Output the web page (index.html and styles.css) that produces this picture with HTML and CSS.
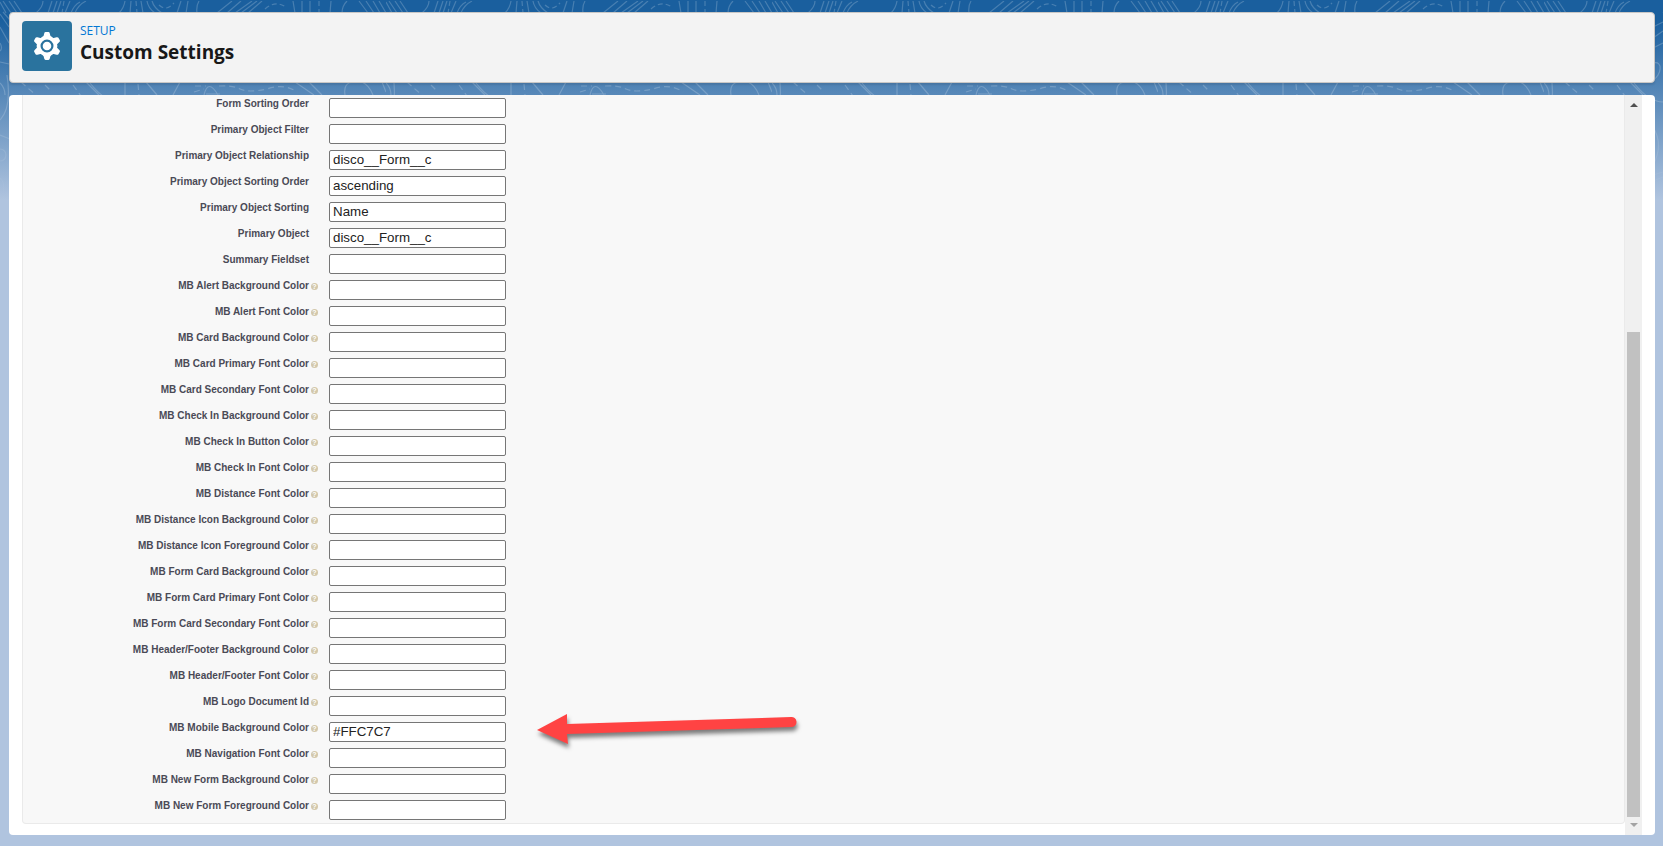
FILE: index.html
```html
<!DOCTYPE html>
<html lang="en">
<head>
    <meta charset="UTF-8">
    <meta name="viewport" content="width=device-width, initial-scale=1.0">
    <title>Custom Settings</title>
    <link rel="stylesheet" href="styles.css">
</head>
<body>

    <svg class="backdrop" width="100%" height="200" aria-hidden="true">
        <defs>
            <pattern id="contours" width="386" height="200" patternUnits="userSpaceOnUse">
                <g fill="none" stroke="#fff" stroke-opacity="0.2" stroke-width="1.2">
                    <path d="M0 2L6 13M3 1L11 13M9 1L17 13M14 1L22 13M43 1Q43 7 36 13M52 1L48 13M57 1L53 13M61 1L57 13M70 1L65 13M80 2Q74 5 71 13M86 1Q78 5 75 13"/>
                    <path d="M125 1Q124 8 119 13M131 1L130 13M141 1L143 13M147 1Q148 8 155 13M152 1Q154 8 162 13M181 1L177 13M188 1L186 13M199 1Q196 6 197 13M232 1L217 13M241 1L227 13M252 1L235 13M257 1L241 13M262 1L248 13M293 1L295 13M302 1V13M310 1V13M331 1L330 13M347 1Q342 6 342 13M359 1L368 13M366 1L374 13M373 1L380 13M379 1L386 13"/>
                    <path stroke-dasharray="5 3" d="M64 1L62 13M136 1L137 13M159 5Q166 12 174 3M265 9Q275 0 286 7M319 1V13"/>
                    <path d="M0 83Q5 88 5 95M86 82L99 95M125 82V95M146 82L157 95M180 82L173 95M204 95Q208 78 218 95M295 82L314 95M309 82L322 95M345 95Q343 83 353 82M362 82Q369 85 373 95M382 82L386 92M206 94H220"/>
                    <path stroke-dasharray="6 4" d="M21 82L37 96M45 85L50 90M73 85L81 96M138 84L139 95M195 86H206M194 92L204 89M219 86Q232 85 240 89T267 89Q284 83 297 92"/>
                    <path d="M0 14L9 27M0 27L9 43M3 12L10 20M0 62L9 64M7 75Q12 108 0 120M0 43Q3 48 0 51M0 135L10 139M0 149A6 6 0 0 1 0 161M0 178Q5 182 3 192"/>
                    <path d="M109 27L119 22M109 38L119 31M109 48L119 43M109 63C120 60 117 76 109 80M90 83Q105 102 119 102M109 127Q120 145 109 165M109 175L119 172M109 181L119 177"/>
                </g>
            </pattern>
        </defs>
        <rect width="100%" height="200" y="1" fill="url(#contours)"/>
    </svg>

    <header class="page-header">
        <svg class="header-icon" width="50" height="50" viewBox="0 0 50 50" aria-hidden="true">
            <rect width="50" height="50" rx="4" fill="#2a739e"/>
            <g transform="translate(25 25)" fill="#fff">
                <circle r="10.4"/>
                <g id="teeth">
                    <path id="tooth" d="M-4 -8L-2.8 -12.6Q-2.5 -14 -1.4 -14H1.4Q2.5 -14 2.8 -12.6L4 -8Z"/>
                    <use href="#tooth" transform="rotate(60)"/>
                    <use href="#tooth" transform="rotate(120)"/>
                    <use href="#tooth" transform="rotate(180)"/>
                    <use href="#tooth" transform="rotate(240)"/>
                    <use href="#tooth" transform="rotate(300)"/>
                </g>
                <circle r="5.4" stroke="#2a739e" stroke-width="2.2"/>
            </g>
        </svg>
        <div class="header-text">
            <p class="header-kicker">SETUP</p>
            <h1>Custom Settings</h1>
        </div>
    </header>

    <main class="panel">
        <form class="settings-form" id="settings-form"></form>
        <div class="scrollbar" aria-hidden="true">
            <svg width="8" height="4"><path d="M0 4L4 0L8 4Z" fill="#505050"/></svg>
            <div class="scroll-thumb"></div>
            <svg width="8" height="4"><path d="M0 0L4 4L8 0Z" fill="#a3a3a3"/></svg>
        </div>
    </main>

    <template id="arrow-template">
        <svg class="arrow" width="270" height="44" aria-hidden="true">
            <path d="M0 18L30 2L30 12L254 5A5 5 0 0 1 255 15L30 22L31 32Z" fill="#ff4343"/>
        </svg>
    </template>

    <script>
        // [label, value, has help link]
        const fields = [
            ["Form Sorting Order", "", false],
            ["Primary Object Filter", "", false],
            ["Primary Object Relationship", "disco__Form__c", false],
            ["Primary Object Sorting Order", "ascending", false],
            ["Primary Object Sorting", "Name", false],
            ["Primary Object", "disco__Form__c", false],
            ["Summary Fieldset", "", false],
            ["MB Alert Background Color", "", true],
            ["MB Alert Font Color", "", true],
            ["MB Card Background Color", "", true],
            ["MB Card Primary Font Color", "", true],
            ["MB Card Secondary Font Color", "", true],
            ["MB Check In Background Color", "", true],
            ["MB Check In Button Color", "", true],
            ["MB Check In Font Color", "", true],
            ["MB Distance Font Color", "", true],
            ["MB Distance Icon Background Color", "", true],
            ["MB Distance Icon Foreground Color", "", true],
            ["MB Form Card Background Color", "", true],
            ["MB Form Card Primary Font Color", "", true],
            ["MB Form Card Secondary Font Color", "", true],
            ["MB Header/Footer Background Color", "", true],
            ["MB Header/Footer Font Color", "", true],
            ["MB Logo Document Id", "", true],
            ["MB Mobile Background Color", "#FFC7C7", true],
            ["MB Navigation Font Color", "", true],
            ["MB New Form Background Color", "", true],
            ["MB New Form Foreground Color", "", true]
        ];

        const form = document.getElementById("settings-form");

        fields.forEach(([name, value, help], i) => {
            const row = document.createElement("div");
            row.className = "form-row";

            const label = document.createElement("label");
            label.htmlFor = "field-" + i;
            label.textContent = name;

            const helpCell = document.createElement("span");
            helpCell.className = "help-cell";
            if (help) {
                const link = document.createElement("a");
                link.className = "help";
                link.href = "#field-" + i;
                link.textContent = "?";
                helpCell.appendChild(link);
            }

            const input = document.createElement("input");
            input.type = "text";
            input.id = "field-" + i;
            input.value = value;

            row.append(label, helpCell, input);
            if (name === "MB Mobile Background Color") {
                row.appendChild(document.getElementById("arrow-template").content.cloneNode(true));
            }
            form.appendChild(row);
        });
    </script>

</body>
</html>
```

FILE: styles.css
```css
* {
    box-sizing: border-box;
}
body {
    margin: 0;
    padding: 12px 8px 11px 9px;
    min-height: 100vh;
    display: flex;
    flex-direction: column;
    gap: 12px;
    font-family: "Liberation Sans", Arial, sans-serif;
    background: linear-gradient(to bottom, #1a5f9e 20px, #b0c4df 200px) no-repeat #b0c4df;
}
.backdrop {
    position: absolute;
    top: 0;
    left: 0;
    z-index: -1;
    mask-image: linear-gradient(to bottom, #000 100px, transparent 200px);
}
.page-header {
    display: flex;
    gap: 8px;
    padding: 8px 12px 11px;
    background-color: #f3f3f3;
    border: 1px solid #c9c7c5;
    border-radius: 4px;
    box-shadow: 0 2px 2px rgba(0, 0, 0, 0.1);
}
.header-icon {
    flex: none;
}
.header-text {
    font-family: "Open Sans", "Segoe UI", sans-serif;
}
.header-kicker {
    margin: 0;
    font-size: 12px;
    line-height: 20px;
    color: #0176d3;
}
h1 {
    margin: 0;
    font-size: 19px;
    line-height: 22px;
    font-weight: 700;
    color: #181818;
}
.panel {
    flex: 1;
    display: flex;
    padding: 0 13px;
    background-color: #fff;
    border-radius: 4px;
}
.settings-form {
    flex: 1;
    margin-bottom: 11px;
    background-color: #f8f8f8;
    border: 1px solid #eaeaea;
    border-top: none;
    border-radius: 0 0 4px 4px;
}
.form-row {
    position: relative;
    display: grid;
    grid-template-columns: 286px 20px 177px;
    height: 26px;
    padding-top: 3px;
}
label {
    font-size: 10px;
    line-height: 12px;
    font-weight: bold;
    text-align: right;
    color: #4a4a56;
}
.help-cell {
    padding: 3px 2px;
}
.help {
    display: block;
    width: 7px;
    height: 7px;
    border-radius: 50%;
    background-color: #d3c8ab;
    color: #fff;
    font-size: 7px;
    line-height: 7px;
    font-weight: bold;
    text-align: center;
    text-decoration: none;
}
input {
    height: 20px;
    padding: 0 3px 2px;
    border: 1px solid #767676;
    border-radius: 2px;
    background-color: #fff;
    color: #222;
    font-family: "Liberation Sans", Arial, sans-serif;
}
.arrow {
    position: absolute;
    left: 514px;
    top: -7px;
    filter: drop-shadow(1px 4px 2px rgba(0, 0, 0, 0.5));
}
.scrollbar {
    width: 17px;
    padding: 8px 2px 8px;
    display: flex;
    flex-direction: column;
    align-items: center;
    background-color: #f0f0f0;
}
.scroll-thumb {
    width: 13px;
    height: 67%;
    margin: auto 0 6px;
    background-color: #c1c1c1;
}
```
